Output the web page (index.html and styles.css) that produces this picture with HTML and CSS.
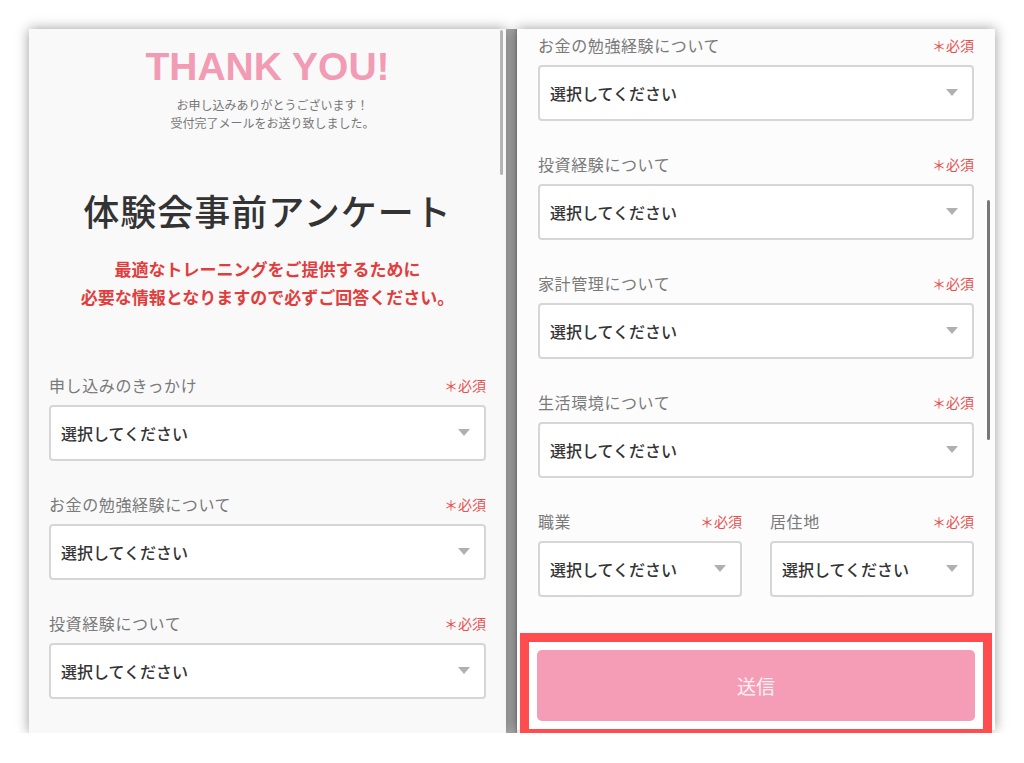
FILE: index.html
```html
<!DOCTYPE html>
<html lang="ja">
<head>
    <meta charset="UTF-8">
    <meta name="viewport" content="width=device-width, initial-scale=1.0">
    <title>体験会事前アンケート</title>

    <link rel="stylesheet" href="styles.css">
</head>
<body>

    <div class="screens">

        <div class="phone">
            <div class="scrollbar scrollbar-left"></div>

            <div class="thanks">
                <h1 class="thanks-title">THANK YOU!</h1>
                <p class="thanks-text">お申し込みありがとうございます！<br>受付完了メールをお送り致しました。</p>
            </div>

            <div class="survey-head">
                <h2 class="survey-title">体験会事前アンケート</h2>
                <p class="survey-note">最適なトレーニングをご提供するために<br>必要な情報となりますので必ずご回答ください。</p>
            </div>

            <div class="fields">
                <div class="field">
                    <div class="field-head">
                        <span class="field-label">申し込みのきっかけ</span>
                        <span class="field-req">＊必須</span>
                    </div>
                    <div class="select">選択してください</div>
                </div>
                <div class="field">
                    <div class="field-head">
                        <span class="field-label">お金の勉強経験について</span>
                        <span class="field-req">＊必須</span>
                    </div>
                    <div class="select">選択してください</div>
                </div>
                <div class="field">
                    <div class="field-head">
                        <span class="field-label">投資経験について</span>
                        <span class="field-req">＊必須</span>
                    </div>
                    <div class="select">選択してください</div>
                </div>
            </div>
        </div>

        <div class="divider"></div>

        <div class="phone phone-right">
            <div class="scrollbar scrollbar-right"></div>

            <div class="field">
                <div class="field-head">
                    <span class="field-label">お金の勉強経験について</span>
                    <span class="field-req">＊必須</span>
                </div>
                <div class="select">選択してください</div>
            </div>
            <div class="field">
                <div class="field-head">
                    <span class="field-label">投資経験について</span>
                    <span class="field-req">＊必須</span>
                </div>
                <div class="select">選択してください</div>
            </div>
            <div class="field">
                <div class="field-head">
                    <span class="field-label">家計管理について</span>
                    <span class="field-req">＊必須</span>
                </div>
                <div class="select">選択してください</div>
            </div>
            <div class="field">
                <div class="field-head">
                    <span class="field-label">生活環境について</span>
                    <span class="field-req">＊必須</span>
                </div>
                <div class="select">選択してください</div>
            </div>

            <div class="field-row">
                <div class="field">
                    <div class="field-head">
                        <span class="field-label">職業</span>
                        <span class="field-req">＊必須</span>
                    </div>
                    <div class="select">選択してください</div>
                </div>
                <div class="field">
                    <div class="field-head">
                        <span class="field-label">居住地</span>
                        <span class="field-req">＊必須</span>
                    </div>
                    <div class="select">選択してください</div>
                </div>
            </div>

            <div class="submit-area">
                <button class="submit">送信</button>
            </div>
        </div>

    </div>

</body>
</html>
```

FILE: styles.css
```css
body {
    margin: 0px;
    background-color: #fff;
    font-family: "Noto Sans CJK JP", "Noto Sans", sans-serif;
}

.screens {
    display: flex;
    padding: 29px 0 0 29px;
}

.phone {
    position: relative;
    width: 477px;
    height: 704px;
    box-sizing: border-box;
    padding: 0 20px;
    background-color: #f9f9f9;
    box-shadow: 0 0 12px rgba(0, 0, 0, 0.4);
    overflow: hidden;
}

.divider {
    width: 11px;
    height: 704px;
    background: linear-gradient(to right, #b4b4b4, #a2a2a2 80%, #8c8c8c);
}

.phone-right {
    width: 478px;
    height: 701px;
    padding: 4px 21px 0;
    background-color: #fcfcfc;
    overflow: visible;
}

.scrollbar {
    position: absolute;
    width: 3px;
    border-radius: 2px;
}
.scrollbar-left {
    left: 471px;
    top: 1px;
    height: 145px;
    background-color: #b5b5b5;
}
.scrollbar-right {
    left: 470px;
    top: 171px;
    height: 240px;
    background-color: #777;
}

/* thanks block */
.thanks {
    padding-top: 18px;
    text-align: center;
}
.thanks-title {
    margin: 0;
    font-family: "Liberation Sans", Arial, sans-serif;
    font-size: 39px;
    line-height: 39px;
    font-weight: bold;
    color: #f29bb4;
}
.thanks-text {
    margin: 10px 0 0 10px;
    font-size: 12px;
    line-height: 18px;
    color: #777;
}

/* survey heading */
.survey-head {
    margin-top: 53px;
    text-align: center;
}
.survey-title {
    margin: 0;
    font-size: 36px;
    line-height: 50px;
    font-weight: 500;
    letter-spacing: 1px;
    color: #333;
}
.survey-note {
    margin: 20px 0 0;
    font-size: 17px;
    line-height: 28px;
    font-weight: bold;
    color: #e23d3d;
}

.fields {
    margin-top: 62px;
}

/* form fields */
.field {
    margin-bottom: 31px;
}
.field-head {
    display: flex;
    justify-content: space-between;
    align-items: center;
    height: 24px;
    margin-bottom: 8px;
}
.field-label {
    font-size: 16px;
    letter-spacing: 0.6px;
    color: #7a7a7a;
}
.field-req {
    font-size: 14px;
    color: #e8504f;
}
.select {
    display: flex;
    justify-content: space-between;
    align-items: center;
    height: 56px;
    box-sizing: border-box;
    padding: 0 14px 0 10px;
    border: 2px solid #d6d6d6;
    border-radius: 4px;
    background-color: #fff;
    font-size: 16px;
    font-weight: 500;
    color: #333;
}
.select::after {
    content: "";
    border-left: 6.5px solid transparent;
    border-right: 6.5px solid transparent;
    border-top: 7px solid #b0b0b0;
    margin-top: -2px;
}

.field-row {
    display: flex;
    gap: 28px;
}
.field-row .field {
    flex: 1;
    margin-bottom: 0;
}

/* submit */
.submit-area {
    margin: 36px -18px 0;
    padding: 8px;
    border: 9px solid #ff4d4f;
    background-color: #fff;
}
.submit {
    display: block;
    width: 100%;
    height: 71px;
    border: none;
    border-radius: 5px;
    background-color: #f59db6;
    color: #fdf0f3;
    font-family: "Noto Sans CJK JP", sans-serif;
    font-size: 19px;
    cursor: pointer;
}
```
